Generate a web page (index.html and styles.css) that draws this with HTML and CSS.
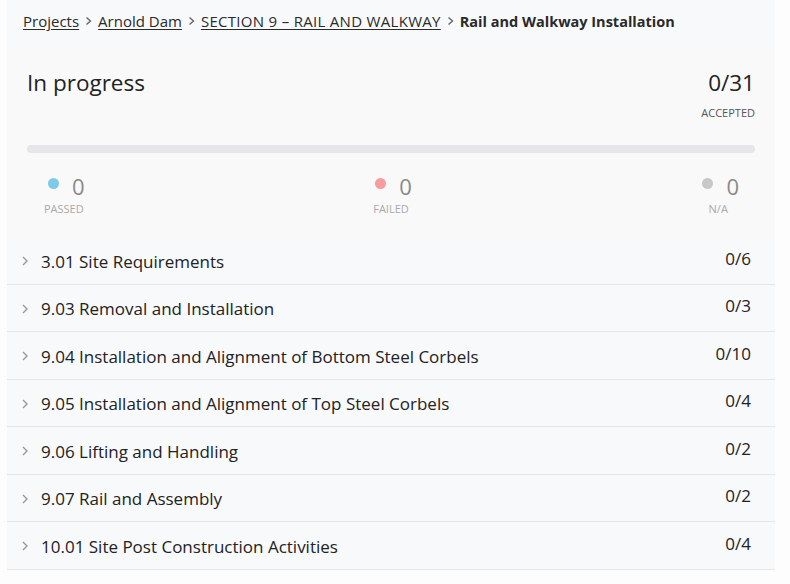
FILE: index.html
```html
<!DOCTYPE html>
<html>
<head>
<meta charset="utf-8">
<link rel="stylesheet" href="styles.css">
</head>
<body>
<div class="page">
  <nav class="crumbs">
    <a class="crumb" href="#">Projects</a>
    <svg class="sep" viewBox="0 0 8 10" width="8" height="10"><path d="M1.5 1.5 L5.5 5 L1.5 8.5" fill="none" stroke="#666" stroke-width="1.4"/></svg>
    <a class="crumb" href="#">Arnold Dam</a>
    <svg class="sep" viewBox="0 0 8 10" width="8" height="10"><path d="M1.5 1.5 L5.5 5 L1.5 8.5" fill="none" stroke="#666" stroke-width="1.4"/></svg>
    <a class="crumb crumb-caps" href="#">SECTION 9 – RAIL AND WALKWAY</a>
    <svg class="sep" viewBox="0 0 8 10" width="8" height="10"><path d="M1.5 1.5 L5.5 5 L1.5 8.5" fill="none" stroke="#666" stroke-width="1.4"/></svg>
    <span class="current">Rail and Walkway Installation</span>
  </nav>

  <section class="summary">
    <div class="summary-head">
      <h1 class="status">In progress</h1>
      <div class="accepted">
        <div class="accepted-num">0/31</div>
        <div class="accepted-label">ACCEPTED</div>
      </div>
    </div>
    <div class="bar"></div>
    <div class="stats">
      <div class="stat">
        <div class="stat-top"><span class="dot dot-pass"></span><span class="stat-num">0</span></div>
        <div class="stat-label">PASSED</div>
      </div>
      <div class="stat">
        <div class="stat-top"><span class="dot dot-fail"></span><span class="stat-num">0</span></div>
        <div class="stat-label">FAILED</div>
      </div>
      <div class="stat">
        <div class="stat-top"><span class="dot dot-na"></span><span class="stat-num">0</span></div>
        <div class="stat-label">N/A</div>
      </div>
    </div>
  </section>

  <ul class="list">
    <li class="row"><svg class="chev" viewBox="0 0 8 12" width="8" height="12"><path d="M2 2 L6 6 L2 10" fill="none" stroke="#999" stroke-width="1.4"/></svg><span class="row-title">3.01 Site Requirements</span><span class="row-count">0/6</span></li>
    <li class="row"><svg class="chev" viewBox="0 0 8 12" width="8" height="12"><path d="M2 2 L6 6 L2 10" fill="none" stroke="#999" stroke-width="1.4"/></svg><span class="row-title">9.03 Removal and Installation</span><span class="row-count">0/3</span></li>
    <li class="row"><svg class="chev" viewBox="0 0 8 12" width="8" height="12"><path d="M2 2 L6 6 L2 10" fill="none" stroke="#999" stroke-width="1.4"/></svg><span class="row-title">9.04 Installation and Alignment of Bottom Steel Corbels</span><span class="row-count">0/10</span></li>
    <li class="row"><svg class="chev" viewBox="0 0 8 12" width="8" height="12"><path d="M2 2 L6 6 L2 10" fill="none" stroke="#999" stroke-width="1.4"/></svg><span class="row-title">9.05 Installation and Alignment of Top Steel Corbels</span><span class="row-count">0/4</span></li>
    <li class="row"><svg class="chev" viewBox="0 0 8 12" width="8" height="12"><path d="M2 2 L6 6 L2 10" fill="none" stroke="#999" stroke-width="1.4"/></svg><span class="row-title">9.06 Lifting and Handling</span><span class="row-count">0/2</span></li>
    <li class="row"><svg class="chev" viewBox="0 0 8 12" width="8" height="12"><path d="M2 2 L6 6 L2 10" fill="none" stroke="#999" stroke-width="1.4"/></svg><span class="row-title">9.07 Rail and Assembly</span><span class="row-count">0/2</span></li>
    <li class="row"><svg class="chev" viewBox="0 0 8 12" width="8" height="12"><path d="M2 2 L6 6 L2 10" fill="none" stroke="#999" stroke-width="1.4"/></svg><span class="row-title">10.01 Site Post Construction Activities</span><span class="row-count">0/4</span></li>
  </ul>
</div>
</body>
</html>
```

FILE: styles.css
```css
* { box-sizing: border-box; }
html, body { margin: 0; padding: 0; }
body {
  background: #fdfdfe;
  font-family: "Open Sans", "Noto Sans", sans-serif;
  color: #222;
  width: 790px;
  height: 584px;
  overflow: hidden;
}
.page {
  width: 768px;
  margin-left: 7px;
}
.crumbs {
  display: flex;
  align-items: center;
  height: 45px;
  padding: 0 16px 3px;
  background: #f8f9fb;
  font-size: 15px;
}
.crumb {
  color: #2a2a2a;
  text-decoration: underline;
  text-underline-offset: 2px;
}
.crumb-caps { letter-spacing: 0.3px; }
.sep { flex: none; margin: 0 5px 0 6px; }
.current {
  font-weight: 700;
  color: #2a2a2a;
  font-size: 14.5px;
}
.summary {
  background: #f9f9f9;
  padding: 10px 20px 0 20px;
  height: 192px;
}
.summary-head {
  display: flex;
  justify-content: space-between;
  align-items: flex-start;
}
.status {
  margin: 13px 0 0;
  font-size: 22.5px;
  font-weight: 400;
  color: #222;
  line-height: 30px;
}
.accepted {
  text-align: right;
  padding-top: 13px;
}
.accepted-num {
  font-size: 22.5px;
  line-height: 30px;
  color: #222;
}
.accepted-label {
  font-size: 11px;
  color: #555;
  margin-top: 8px;
  line-height: 14px;
}
.bar {
  margin-top: 25px;
  height: 8px;
  border-radius: 4px;
  background: #e6e6ea;
}
.stats {
  display: flex;
  justify-content: space-between;
  padding: 0 16px;
  margin-top: 19px;
}
.stat {
  display: flex;
  flex-direction: column;
  align-items: center;
}
.stat-top {
  display: flex;
  align-items: center;
  gap: 13px;
  height: 28px;
}
.dot {
  width: 11px;
  height: 11px;
  border-radius: 50%;
  margin-top: -6px;
  margin-left: 5px;
}
.dot-pass { background: #7ecbe9; }
.dot-fail { background: #f89c9e; }
.dot-na { background: #c8c8c8; }
.stat-num {
  font-size: 22px;
  color: #8a8a8a;
  line-height: 28px;
}
.stat-label {
  font-size: 11px;
  color: #a9a9a9;
  line-height: 14px;
  margin-top: 2px;
}
.list {
  list-style: none;
  margin: 0;
  padding: 0;
  background: #f8f9fb;
}
.row {
  display: flex;
  align-items: center;
  height: 47.5px;
  border-bottom: 1px solid #e3e5e8;
  padding: 2px 24px 0 14px;
  font-size: 17px;
}
.chev { flex: none; margin-right: 12px; margin-top: 0; }
.row-title {
  flex: 1;
  color: #222;
}
.row-count {
  color: #222;
  margin-top: -6px;
}
```
